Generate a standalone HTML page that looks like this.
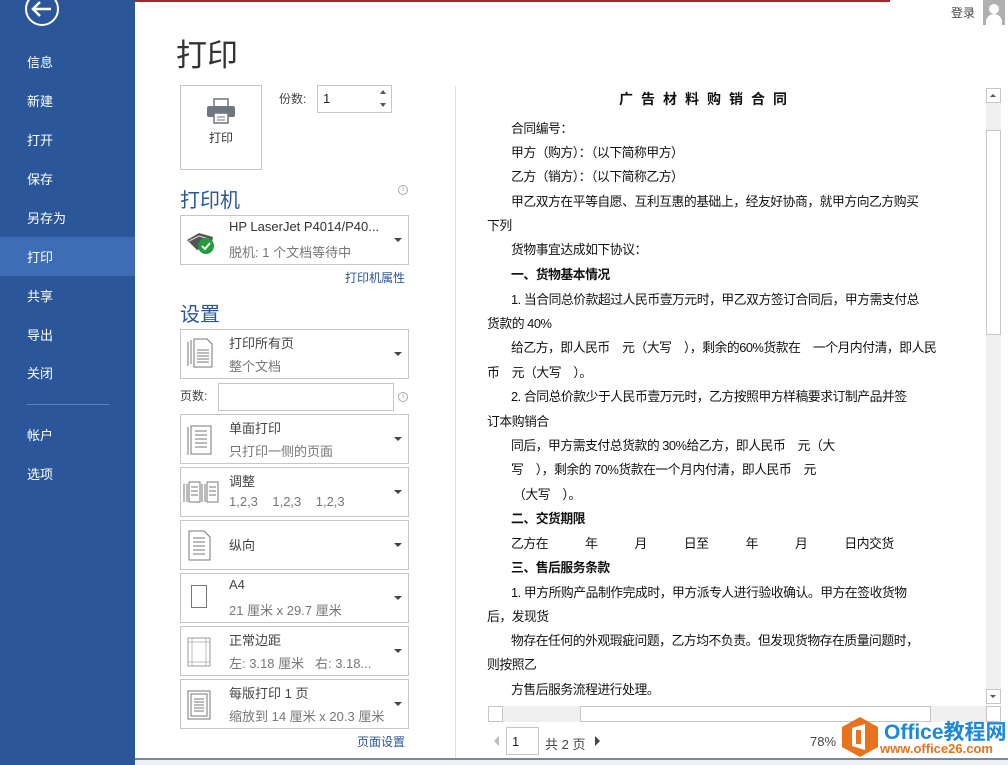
<!DOCTYPE html>
<html><head><meta charset="utf-8"><style>
*{margin:0;padding:0;box-sizing:border-box}
body{width:1008px;height:765px;position:relative;overflow:hidden;background:#fff;font-family:"Liberation Sans","Noto Sans CJK SC",sans-serif;color:#444}
.a{position:absolute;white-space:nowrap}
#side{position:absolute;left:0;top:0;width:135px;height:765px;background:#2b579a}
.nav{position:absolute;left:27px;color:#fff;font-size:13px}
.box{position:absolute;left:180px;width:229px;border:1px solid #c6c6c6;background:#fff}
.box .t1{position:absolute;left:48px;top:3px;font-size:13px;color:#444}
.box .t2{position:absolute;left:48px;top:26px;font-size:13px;color:#777}
.box .dd{position:absolute;right:6px;top:22px;width:0;height:0;border-left:4px solid transparent;border-right:4px solid transparent;border-top:4px solid #444}
.d{position:absolute;white-space:nowrap;font-size:12.8px;color:#111;letter-spacing:-0.45px}
.b{font-weight:bold}
</style></head><body>
<div id="side">
<svg class="a" style="left:22px;top:-11px" width="40" height="40"><circle cx="20" cy="20" r="16" fill="none" stroke="#fff" stroke-width="2"/><path d="M29 20H12M18 13l-7 7 7 7" fill="none" stroke="#fff" stroke-width="2.5"/></svg>
<div class="nav" style="top:52px">信息</div>
<div class="nav" style="top:91px">新建</div>
<div class="nav" style="top:130px">打开</div>
<div class="nav" style="top:169px">保存</div>
<div class="nav" style="top:208px">另存为</div>
<div class="a" style="left:0;top:237px;width:135px;height:39px;background:#3e6db5"></div>
<div class="nav" style="top:247px">打印</div>
<div class="nav" style="top:286px">共享</div>
<div class="nav" style="top:325px">导出</div>
<div class="nav" style="top:363px">关闭</div>
<div class="a" style="left:27px;top:404px;width:82px;height:1px;background:#5a7fbf"></div>
<div class="nav" style="top:425px">帐户</div>
<div class="nav" style="top:464px">选项</div>
</div>
<div class="a" style="left:135px;top:0;width:755px;height:2px;background:#a4262c"></div>
<div class="a" style="left:951px;top:4px;font-size:12px;color:#444">登录</div>
<div class="a" style="left:983px;top:0;width:22px;height:25px;background:#b0b0b0"><div class="a" style="left:6px;top:4px;width:10px;height:10px;border-radius:50%;background:#fff"></div><div class="a" style="left:3px;top:14px;width:16px;height:11px;border-radius:8px 8px 0 0;background:#fff"></div></div>

<div class="a" style="left:176px;top:30px;font-size:31px;color:#333">打印</div>
<div class="a" style="left:180px;top:85px;width:82px;height:85px;border:1px solid #c6c6c6"></div>
<svg class="a" style="left:205px;top:98px" width="32" height="26"><rect x="9" y="1" width="14" height="8" fill="#fff" stroke="#6e7680" stroke-width="1.5"/><rect x="2" y="8" width="28" height="11" rx="2" fill="#6e7680"/><rect x="9" y="15" width="14" height="10" fill="#fff" stroke="#6e7680" stroke-width="1.5"/><path d="M12 19h8M12 22h8" stroke="#6e7680"/></svg>
<div class="a" style="left:209px;top:129px;font-size:12px;color:#333">打印</div>
<div class="a" style="left:279px;top:90px;font-size:12px;color:#444">份数:</div>
<div class="a" style="left:317px;top:85px;width:75px;height:28px;border:1px solid #c6c6c6;font-size:13px;padding:5px 5px;color:#222">1</div>
<div class="a" style="left:380px;top:90px;border-left:3px solid transparent;border-right:3px solid transparent;border-bottom:4px solid #555"></div>
<div class="a" style="left:380px;top:103px;border-left:3px solid transparent;border-right:3px solid transparent;border-top:4px solid #555"></div>
<div class="a" style="left:180px;top:184px;font-size:20px;color:#2b579a">打印机</div>
<div class="a" style="left:398px;top:185px;width:10px;height:10px;border:1px solid #aaa;border-radius:50%;font-size:7px;text-align:center;line-height:8px;color:#999">i</div>
<div class="box" style="top:215px;height:50px"><svg class="a" style="left:4px;top:14px" width="32" height="26"><path d="M2 10l12-7 14 4-2 9-14 4z" fill="#555"/><path d="M4 11l10-5 10 3" stroke="#ddd" fill="none"/><circle cx="21" cy="16" r="8" fill="#1f9e3c"/><path d="M17 16l3 3 5-6" stroke="#fff" stroke-width="2" fill="none"/></svg><div class="t1" style="color:#333">HP LaserJet P4014/P40...</div><div class="t2">脱机: 1 个文档等待中</div><div class="dd"></div></div>
<div class="a" style="left:345px;top:269px;font-size:12px;color:#2b579a">打印机属性</div>
<div class="a" style="left:180px;top:298px;font-size:20px;color:#2b579a">设置</div>
<div class="box" style="top:329px;height:50px"><svg class="a" style="left:6px;top:8px" width="28" height="30" fill="none" stroke="#777"><path d="M1 4v24M4 2v24"/><path d="M7 1h13l5 5v23H7z" fill="#fff"/><path d="M10 12h12M10 15h12M10 18h12M10 21h12M10 24h12"/></svg><div class="t1">打印所有页</div><div class="t2">整个文档</div><div class="dd"></div></div>
<div class="a" style="left:180px;top:387px;font-size:12px;color:#444">页数:</div>
<div class="a" style="left:218px;top:383px;width:176px;height:28px;border:1px solid #c6c6c6"></div>
<div class="a" style="left:398px;top:392px;width:10px;height:10px;border:1px solid #aaa;border-radius:50%;font-size:7px;text-align:center;line-height:8px;color:#999">i</div>
<div class="box" style="top:414px;height:50px"><svg class="a" style="left:6px;top:10px" width="28" height="32" fill="none" stroke="#777"><path d="M1 2v28"/><rect x="4" y="1" width="20" height="28" fill="#fff"/><path d="M8 6h12M8 10h12M8 14h12M8 18h12M8 22h12"/></svg><div class="t1">单面打印</div><div class="t2">只打印一侧的页面</div><div class="dd"></div></div>
<div class="box" style="top:467px;height:50px"><svg class="a" style="left:2px;top:13px" width="36" height="24" fill="none" stroke="#777"><path d="M1 3v18M4 3v18M19 3v18M22 3v18"/><rect x="6" y="1" width="11" height="20" fill="#fff"/><rect x="24" y="1" width="11" height="20" fill="#fff"/><path d="M8 6h7M8 10h7M8 14h7M26 6h7M26 10h7M26 14h7"/></svg><div class="t1">调整</div><div class="t2">1,2,3&nbsp;&nbsp;&nbsp;&nbsp;1,2,3&nbsp;&nbsp;&nbsp;&nbsp;1,2,3</div><div class="dd"></div></div>
<div class="box" style="top:520px;height:50px"><svg class="a" style="left:6px;top:9px" width="26" height="32" fill="none" stroke="#777"><path d="M2 1h15l6 6v23H2z"/><path d="M6 8h12M6 12h12M6 16h12M6 20h12M6 24h12"/></svg><div class="t1" style="top:14px">纵向</div><div class="dd"></div></div>
<div class="box" style="top:573px;height:50px"><div class="a" style="left:10px;top:11px;width:16px;height:23px;border:1px solid #777"></div><div class="t1">A4</div><div class="t2">21 厘米 x 29.7 厘米</div><div class="dd"></div></div>
<div class="box" style="top:626px;height:50px"><svg class="a" style="left:6px;top:10px" width="24" height="30" fill="none" stroke="#999"><rect x="1" y="1" width="22" height="28"/><path d="M5 1v28M19 1v28M1 5h22M1 25h22" stroke="#bbb"/></svg><div class="t1">正常边距</div><div class="t2">左: 3.18 厘米&nbsp;&nbsp;&nbsp;右: 3.18...</div><div class="dd"></div></div>
<div class="box" style="top:679px;height:50px"><svg class="a" style="left:6px;top:10px" width="24" height="30" fill="none" stroke="#777"><rect x="1" y="1" width="22" height="28"/><rect x="4" y="4" width="16" height="22"/><path d="M7 9h10M7 12h10M7 15h10M7 18h10M7 21h10"/></svg><div class="t1">每版打印 1 页</div><div class="t2">缩放到 14 厘米 x 20.3 厘米</div><div class="dd"></div></div>
<div class="a" style="left:357px;top:733px;font-size:12px;color:#2b579a">页面设置</div>

<div class="a" style="left:455px;top:86px;width:1px;height:672px;background:#e1e1e1"></div>
<div class="a" style="left:135px;top:758px;width:873px;height:2px;background:#7a8899"></div>
<div class="a" style="left:135px;top:760px;width:873px;height:5px;background:#eef0f4"></div>

<div class="d b" style="left:619px;top:89px;font-size:14px;letter-spacing:8px">广告材料购销合同</div>
<div class="d" style="left:511px;top:118px">合同编号：</div>
<div class="d" style="left:511px;top:142px">甲方（购方）：（以下简称甲方）</div>
<div class="d" style="left:511px;top:166px">乙方（销方）：（以下简称乙方）</div>
<div class="d" style="left:511px;top:191px">甲乙双方在平等自愿、互利互惠的基础上，经友好协商，就甲方向乙方购买</div>
<div class="d" style="left:487px;top:215px">下列</div>
<div class="d" style="left:511px;top:239px">货物事宜达成如下协议：</div>
<div class="d b" style="left:511px;top:264px">一、货物基本情况</div>
<div class="d" style="left:511px;top:289px">1. 当合同总价款超过人民币壹万元时，甲乙双方签订合同后，甲方需支付总</div>
<div class="d" style="left:487px;top:313px">货款的 40%</div>
<div class="d" style="left:511px;top:337px">给乙方，即人民币　元（大写　），剩余的60%货款在　一个月内付清，即人民</div>
<div class="d" style="left:487px;top:362px">币　元（大写　）。</div>
<div class="d" style="left:511px;top:386px">2. 合同总价款少于人民币壹万元时，乙方按照甲方样稿要求订制产品并签</div>
<div class="d" style="left:487px;top:411px">订本购销合</div>
<div class="d" style="left:511px;top:435px">同后，甲方需支付总货款的 30%给乙方，即人民币　元（大</div>
<div class="d" style="left:511px;top:459px">写　），剩余的 70%货款在一个月内付清，即人民币　元</div>
<div class="d" style="left:513px;top:484px">（大写　）。</div>
<div class="d b" style="left:511px;top:508px">二、交货期限</div>
<div class="d" style="left:511px;top:533px">乙方在　　　年　　　月　　　日至　　　年　　　月　　　日内交货</div>
<div class="d b" style="left:511px;top:557px">三、售后服务条款</div>
<div class="d" style="left:511px;top:582px">1. 甲方所购产品制作完成时，甲方派专人进行验收确认。甲方在签收货物</div>
<div class="d" style="left:487px;top:606px">后，发现货</div>
<div class="d" style="left:511px;top:630px">物存在任何的外观瑕疵问题，乙方均不负责。但发现货物存在质量问题时，</div>
<div class="d" style="left:487px;top:654px">则按照乙</div>
<div class="d" style="left:511px;top:679px">方售后服务流程进行处理。</div>

<div class="a" style="left:986px;top:88px;width:15px;height:616px;background:#f0f0f0"></div>
<div class="a" style="left:986px;top:88px;width:15px;height:15px;border:1px solid #c6c6c6;background:#fff"></div>
<div class="a" style="left:990px;top:94px;border-left:3px solid transparent;border-right:3px solid transparent;border-bottom:3px solid #555"></div>
<div class="a" style="left:986px;top:130px;width:15px;height:205px;background:#fff;border:1px solid #c6c6c6"></div>
<div class="a" style="left:986px;top:689px;width:15px;height:15px;border:1px solid #c6c6c6;background:#fff"></div>
<div class="a" style="left:990px;top:695px;border-left:3px solid transparent;border-right:3px solid transparent;border-top:3px solid #555"></div>
<div class="a" style="left:488px;top:706px;width:513px;height:16px;background:#f0f0f0"></div>
<div class="a" style="left:488px;top:706px;width:15px;height:16px;border:1px solid #c6c6c6;background:#fff"></div>
<div class="a" style="left:580px;top:706px;width:351px;height:16px;border:1px solid #c6c6c6;background:#fff"></div>
<div class="a" style="left:986px;top:706px;width:15px;height:16px;border:1px solid #c6c6c6;background:#fff"></div>

<div class="a" style="left:494px;top:736px;border-top:5px solid transparent;border-bottom:5px solid transparent;border-right:5px solid #bbb"></div>
<div class="a" style="left:506px;top:727px;width:33px;height:28px;border:1px solid #c6c6c6;font-size:13px;padding:6px 5px;color:#222">1</div>
<div class="a" style="left:545px;top:734px;font-size:13px;color:#444">共 2 页</div>
<div class="a" style="left:595px;top:736px;border-top:5px solid transparent;border-bottom:5px solid transparent;border-left:5px solid #444"></div>
<div class="a" style="left:810px;top:734px;font-size:13px;color:#444">78%</div>
<svg class="a" style="left:840px;top:716px" width="40" height="42"><path d="M20 1l18 10v20L20 41 2 31V11z" fill="#e8731c"/><path d="M12 12l13-4v26l-13-4z" fill="#fff"/><rect x="16" y="14" width="5" height="14" fill="#e8731c"/></svg>
<div class="a b" style="left:884px;top:716px;font-size:21px;color:#1e88d8">Office<span style="color:#1e88d8">教程网</span></div>
<div class="a" style="left:880px;top:741px;font-size:13px;color:#e8731c;font-weight:bold">www.office26.com</div>
</body></html>
